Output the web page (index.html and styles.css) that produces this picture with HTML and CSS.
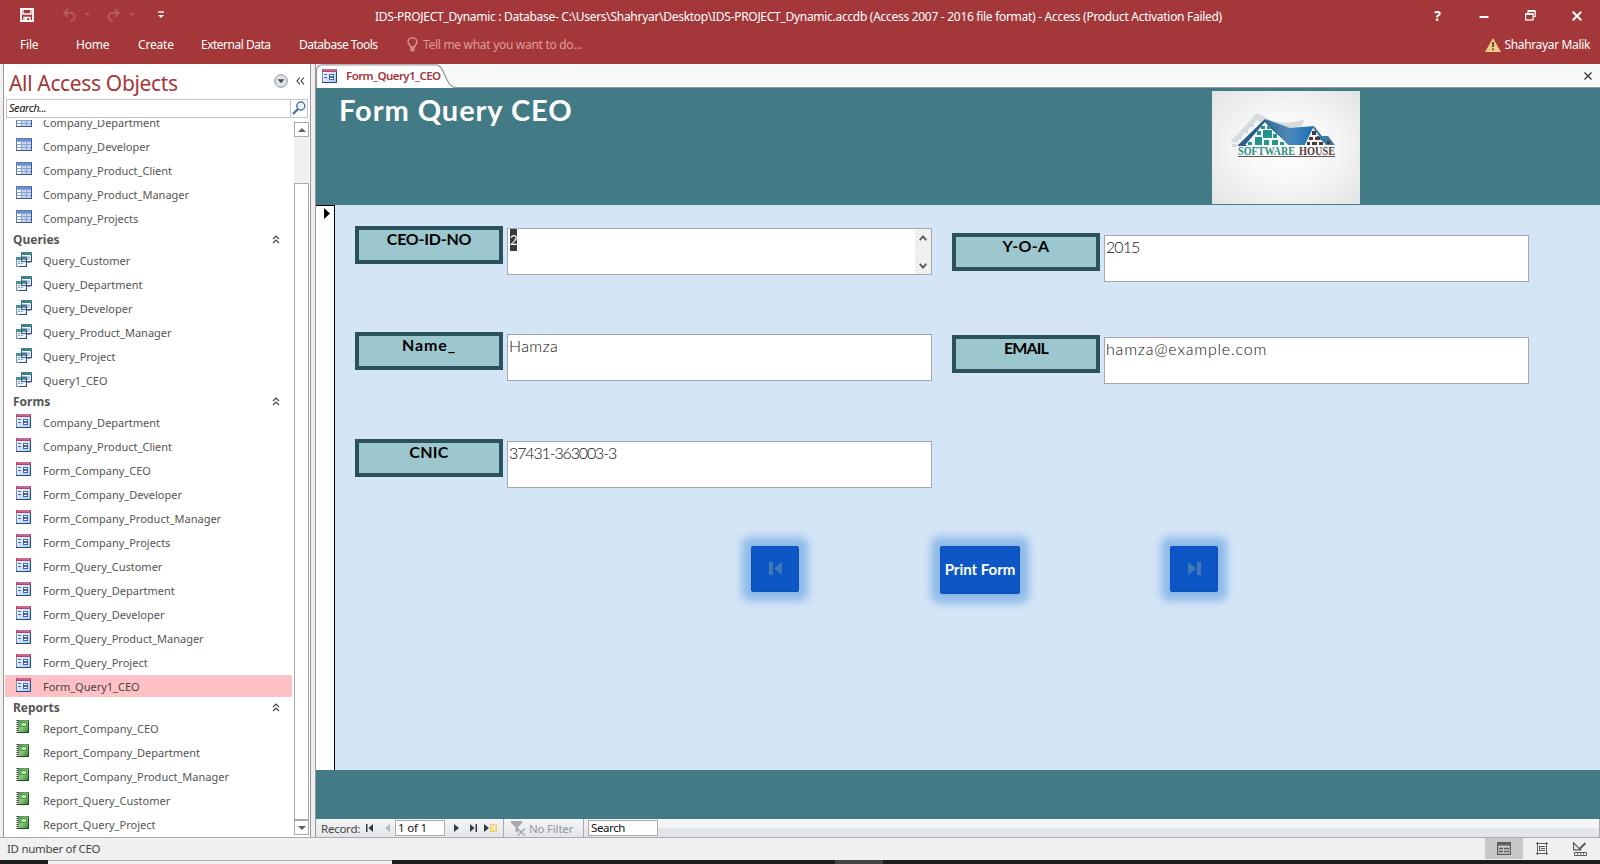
FILE: index.html
```html
<!DOCTYPE html>
<html lang="en">
<head>
<meta charset="utf-8">
<title>IDS-PROJECT_Dynamic - Access</title>
<link rel="stylesheet" href="styles.css">
</head>
<body>
<svg class="defs" width="0" height="0">
  <defs>
    <linearGradient id="gb" x1="0" y1="0" x2="1" y2="1"><stop offset="0" stop-color="#fff"/><stop offset="1" stop-color="#a9c4ee"/></linearGradient>
    <linearGradient id="gg" x1="0" y1="0" x2="1" y2="1"><stop offset="0" stop-color="#4f9a4c"/><stop offset=".5" stop-color="#8cc97c"/><stop offset="1" stop-color="#2d6b31"/></linearGradient>
  </defs>
  <symbol id="table" viewBox="0 0 16 14">
    <rect x=".5" y=".5" width="15" height="12" fill="#fff" stroke="#5c7ab5"/>
    <path d="M1 1h14v2H1z" fill="#6f8fc8"/><path d="M6 3h9v9H6z" fill="#c3d5f3"/>
    <path d="M1 3.500h14M1 6.500h14M1 9.500h14M5.500 3v10M10.500 3v10" stroke="#8ba4d2" fill="none"/>
    <path d="M0 12.500h16M15.500 1v12" stroke="#3a5896"/>
  </symbol>
  <symbol id="query" viewBox="0 0 16 15">
    <rect x="5.500" y=".5" width="10" height="9" fill="#eef4fc" stroke="#4c72a8"/><path d="M5 0h11v3H5z" fill="#3f8585"/>
    <path d="M11 5h3M11 7h3" stroke="#7c9ccc"/><path d="M15.500 3v7H11" stroke="#2d4d80" fill="none"/>
    <rect x=".5" y="5.500" width="10" height="9" fill="#eef4fc" stroke="#6f92c2"/><path d="M0 5h11v3H0z" fill="#4c9090"/>
    <path d="M2 9.500h2M5 9.500h2M2 11.500h2M5 11.500h2" stroke="#7c9ccc"/><path d="M5.500 5v4.500h5V5z" fill="none" stroke="#3b5c80"/><path d="M10.500 9v5.500H3" stroke="#2d4d80" fill="none"/>
  </symbol>
  <symbol id="form" viewBox="0 0 15 14">
    <rect x=".5" y=".5" width="14" height="13" fill="url(#gb)" stroke="#7289ba"/>
    <path d="M0 0h15v3H0z" fill="#b54672"/><path d="M1 1h13" stroke="#d889a6"/>
    <path d="M2 5.500h3M2 8.500h3" stroke="#4968a5"/><rect x="7.500" y="5.500" width="4" height="2" fill="#fff" stroke="#4968a5"/><rect x="7.500" y="8.500" width="4" height="2" fill="#fff" stroke="#4968a5"/>
    <path d="M14.500 3v10.500H0" stroke="#24457c" fill="none"/>
  </symbol>
  <symbol id="report" viewBox="0 0 14 14">
    <path d="M2 0h11v13H2z" fill="url(#gg)"/><path d="M12.500 0v13M2 12.500h11" stroke="#1f4d26" fill="none"/><path d="M2 .5h11" stroke="#5e8f5b"/>
    <rect x="5" y="2.500" width="5.500" height="4" fill="#b6e2a5" stroke="#4f9449"/>
    <path d="M1.500 0v13" stroke="#333" stroke-width="2" stroke-dasharray="1 1"/>
  </symbol>
  <symbol id="chev" viewBox="0 0 8 9"><path d="M1 4l3-3 3 3M1 8l3-3 3 3" fill="none" stroke="#444" stroke-width="1.200"/></symbol>
</svg>

<header class="ribbon">
  <div class="titlebar">
    <div class="quick">
      <svg class="save" width="14" height="14" viewBox="0 0 14 14"><path d="M1 1h12v12H1z" fill="none" stroke="#fff" stroke-width="1.800"/><path d="M3 1v5h8V1M4 13V9.500h6V13" fill="none" stroke="#fff" stroke-width="1.300"/><path d="M5 10h2v3H5z" fill="#fff"/></svg>
      <svg class="undo" width="30" height="14" viewBox="0 0 30 14"><path d="M6 1L2 5l4 4M2 5h7c5 0 5 7-1 8" fill="none" stroke="#b85a5e" stroke-width="1.800"/><path d="M23 5h5l-2.500 3z" fill="#b85a5e"/></svg>
      <svg class="redo" width="30" height="14" viewBox="0 0 30 14"><path d="M9 1l4 4-4 4M13 5H6c-5 0-5 7 1 8" fill="none" stroke="#b85a5e" stroke-width="1.800"/><path d="M23 5h5l-2.500 3z" fill="#b85a5e"/></svg>
      <svg class="more" width="6" height="8" viewBox="0 0 6 8"><path d="M0 1h6" stroke="#fff" stroke-width="1.400"/><path d="M0 4h6L3 7z" fill="#fff"/></svg>
    </div>
    <div class="caption">IDS-PROJECT_Dynamic : Database- C:\Users\Shahryar\Desktop\IDS-PROJECT_Dynamic.accdb (Access 2007 - 2016 file format) - Access (Product Activation Failed)</div>
    <div class="winbtns">
      <span class="help">?</span>
      <svg width="10" height="12" viewBox="0 0 10 12"><path d="M.5 7h9" stroke="#fff" stroke-width="2"/></svg>
      <svg width="11" height="11" viewBox="0 0 11 11"><path d="M3 3.500V1h7.200v5.500H8" fill="none" stroke="#fff" stroke-width="1.200"/><path d="M3 1h7" stroke="#fff" stroke-width="2"/><rect x=".6" y="4" width="7.500" height="6" fill="none" stroke="#fff" stroke-width="1.200"/><path d="M0 4.200h8.500" stroke="#fff" stroke-width="1.600"/></svg>
      <svg width="10" height="10" viewBox="0 0 10 10"><path d="M.8.8l8.400 8.400M9.200.8L.8 9.200" stroke="#fff" stroke-width="2"/></svg>
    </div>
  </div>
  <nav class="menus">
    <span class="m-file">File</span><span class="m-home">Home</span><span class="m-create">Create</span><span class="m-ext">External Data</span><span class="m-db">Database Tools</span>
    <span class="tell"><svg width="11" height="15" viewBox="0 0 11 15"><path d="M3.500 10C3.500 8 1 7.500 1 4.800a4.500 4 0 0 1 9 0C10 7.500 7.500 8 7.500 10z" fill="none" stroke="#e09a9c" stroke-width="1.300"/><path d="M3 11.800h5M3.500 13.500h4" stroke="#e09a9c" stroke-width="1.300"/></svg>Tell me what you want to do...</span>
    <span class="user"><svg width="16" height="14" viewBox="0 0 16 14"><path d="M8 0l8 14H0z" fill="#f0c987"/><path d="M8 4v5M8 10.500v1.800" stroke="#54432a" stroke-width="1.800"/></svg><span class="uname">Shahrayar Malik</span></span>
  </nav>
</header>

<div class="workspace">
  <aside class="pane">
    <div class="pane-head">
      <h2>All Access Objects</h2>
      <svg width="14" height="14" viewBox="0 0 14 14"><circle cx="7" cy="7" r="6.300" fill="#e2e4e8" stroke="#8c9199"/><path d="M3.500 5.200h7L7 9.200z" fill="#444b57"/></svg>
      <svg class="shut" width="9" height="8" viewBox="0 0 9 8"><path d="M4 .5L1 4l3 3.500M8 .5L5 4l3 3.500" fill="none" stroke="#333" stroke-width="1.100"/></svg>
    </div>
    <div class="search"><span>Search...</span><i><svg width="14" height="14" viewBox="0 0 14 14"><circle cx="8.800" cy="5" r="4" fill="#eef5fd" stroke="#4a75ae" stroke-width="1.400"/><path d="M6 8l-5 5" stroke="#4a6fa5" stroke-width="2.400"/></svg></i></div>
    <div class="list-area">
      <div class="list">
        <ul class="first">
          <li><svg class="ic"><use href="#table"/></svg>Company_Department</li>
          <li><svg class="ic"><use href="#table"/></svg>Company_Developer</li>
          <li><svg class="ic"><use href="#table"/></svg>Company_Product_Client</li>
          <li><svg class="ic"><use href="#table"/></svg>Company_Product_Manager</li>
          <li><svg class="ic"><use href="#table"/></svg>Company_Projects</li>
        </ul>
        <h3>Queries<svg width="8" height="9"><use href="#chev"/></svg></h3>
        <ul>
          <li><svg class="ic q"><use href="#query"/></svg>Query_Customer</li>
          <li><svg class="ic q"><use href="#query"/></svg>Query_Department</li>
          <li><svg class="ic q"><use href="#query"/></svg>Query_Developer</li>
          <li><svg class="ic q"><use href="#query"/></svg>Query_Product_Manager</li>
          <li><svg class="ic q"><use href="#query"/></svg>Query_Project</li>
          <li><svg class="ic q"><use href="#query"/></svg>Query1_CEO</li>
        </ul>
        <h3>Forms<svg width="8" height="9"><use href="#chev"/></svg></h3>
        <ul>
          <li><svg class="ic f"><use href="#form"/></svg>Company_Department</li>
          <li><svg class="ic f"><use href="#form"/></svg>Company_Product_Client</li>
          <li><svg class="ic f"><use href="#form"/></svg>Form_Company_CEO</li>
          <li><svg class="ic f"><use href="#form"/></svg>Form_Company_Developer</li>
          <li><svg class="ic f"><use href="#form"/></svg>Form_Company_Product_Manager</li>
          <li><svg class="ic f"><use href="#form"/></svg>Form_Company_Projects</li>
          <li><svg class="ic f"><use href="#form"/></svg>Form_Query_Customer</li>
          <li><svg class="ic f"><use href="#form"/></svg>Form_Query_Department</li>
          <li><svg class="ic f"><use href="#form"/></svg>Form_Query_Developer</li>
          <li><svg class="ic f"><use href="#form"/></svg>Form_Query_Product_Manager</li>
          <li><svg class="ic f"><use href="#form"/></svg>Form_Query_Project</li>
          <li class="selected"><svg class="ic f"><use href="#form"/></svg>Form_Query1_CEO</li>
        </ul>
        <h3>Reports<svg width="8" height="9"><use href="#chev"/></svg></h3>
        <ul>
          <li><svg class="ic r"><use href="#report"/></svg>Report_Company_CEO</li>
          <li><svg class="ic r"><use href="#report"/></svg>Report_Company_Department</li>
          <li><svg class="ic r"><use href="#report"/></svg>Report_Company_Product_Manager</li>
          <li><svg class="ic r"><use href="#report"/></svg>Report_Query_Customer</li>
          <li><svg class="ic r"><use href="#report"/></svg>Report_Query_Project</li>
        </ul>
      </div>
      <div class="scroll">
        <span class="sbtn"><svg width="8" height="4" viewBox="0 0 8 4"><path d="M0 4l4-4 4 4z" fill="#606060"/></svg></span>
        <span class="thumb"></span>
        <span class="sbtn"><svg width="8" height="4" viewBox="0 0 8 4"><path d="M0 0l4 4 4-4z" fill="#606060"/></svg></span>
      </div>
    </div>
  </aside>
  <div class="splitter"></div>

  <main class="doc">
    <div class="tabs">
      <svg class="tabshape" width="140" height="24" viewBox="0 0 140 24"><path d="M.5 24V6Q1 1 6 .8H120C129 1 129 23.500 140 23.500V24z" fill="#fff"/><path d="M.5 24V6Q1 1 6 .8H120C129 1 129 23.500 140 23.500" fill="none" stroke="#9a9f98" stroke-width="1.300"/></svg>
      <div class="tab"><svg width="15" height="14"><use href="#form"/></svg><span>Form_Query1_CEO</span></div>
      <svg class="close" width="8" height="8" viewBox="0 0 8 8"><path d="M.5.5l7 7M7.500.5l-7 7" stroke="#333" stroke-width="1.300"/></svg>
    </div>
    <section class="form-head">
      <h1>Form Query CEO</h1>
      <div class="logo">
        <svg width="148" height="113" viewBox="0 0 148 113">
          <defs>
            <radialGradient id="lg" cx=".5" cy=".5" r=".7"><stop offset="0" stop-color="#fff"/><stop offset=".4" stop-color="#f8f8f8"/><stop offset="1" stop-color="#e3e4e4"/></radialGradient>
            <linearGradient id="roof" x1="0" x2="1"><stop offset="0" stop-color="#2f6d9f"/><stop offset=".45" stop-color="#4e87b4"/><stop offset=".65" stop-color="#3d82bd"/><stop offset="1" stop-color="#1b70b0"/></linearGradient>
          </defs>
          <rect width="148" height="113" fill="url(#lg)"/>
          <path d="M18 51L45 22l15 8 14 2 18-3-5 14H60L45 29 24 52z" fill="#d9dcdc"/>
          <path d="M25 44h5v4h-5zM32 38h4v4h-4zM37 32h5v4h-5zM20 53h5v3h-5z" fill="#d8dada"/>
          <path d="M26 54L53 28l25 25H76L53 32 34 55h-8z" fill="#285f8a"/>
          <path d="M53 28l25 9 24-2-9 19H76z" fill="url(#roof)"/>
          <path d="M33 54l20-23 20 23z" fill="#f7fbfb"/>
          <path d="M102 35l14 19H93z" fill="#f3f3f3"/><path d="M102 35l15 19h-3l-13-17z" fill="#327caf"/>
          <path d="M104 45h12l7 9h-8zM116 45l7 9h-2l-6-7z" fill="#3979a5"/>
          <path d="M51 39h9v8h-9zM43 46h7v8h-7zM52 49h5v5h-5zM60 49h6v5h-6zM45 40h4v4h-4zM61 43h4v4h-4zM49 35h4v3h-4zM55 35h4v3h-4zM36 51h4v3h-4zM68 51h4v3h-4z" fill="#24958a"/>
          <path d="M100 40h4v4h-4zM97 46h4v3h-4zM103 46h5v3h-5zM95 51h3v3h-3zM100 51h5v3h-5zM107 51h4v3h-4zM115 50h3v3h-3z" fill="#4c3a3b"/>
          <text x="26" y="63.500" textLength="57" lengthAdjust="spacingAndGlyphs" class="logo-a">SOFTWARE</text>
          <text x="87" y="63.500" textLength="36" lengthAdjust="spacingAndGlyphs" class="logo-b">HOUSE</text>
          <path d="M26 65.500h97" stroke="#67504f"/>
        </svg>
      </div>
    </section>
    <section class="detail">
      <div class="selector"><svg width="6" height="11" viewBox="0 0 6 11"><path d="M0 0l6 5.500L0 11z" fill="#000"/></svg></div>
      <div class="canvas">
        <div class="fields">
          <div class="col left">
            <div class="field"><label class="w-id">CEO-ID-NO</label><div class="box active"><span class="sel">2</span><div class="mini"><svg width="8" height="6" viewBox="0 0 8 6"><path d="M.8 5.200L4 1.500l3.200 3.700" fill="none" stroke="#555" stroke-width="1.800"/></svg><svg width="8" height="6" viewBox="0 0 8 6"><path d="M.8.800L4 4.500 7.200.8" fill="none" stroke="#555" stroke-width="1.800"/></svg></div></div></div>
            <div class="field"><label class="w-name">Name_</label><div class="box v-name">Hamza</div></div>
            <div class="field"><label>CNIC</label><div class="box v-cnic">37431-363003-3</div></div>
          </div>
          <div class="col right">
            <div class="field"><label>Y-O-A</label><div class="box v-year">2015</div></div>
            <div class="field"><label class="w-mail">EMAIL</label><div class="box v-mail">hamza@example.com</div></div>
          </div>
        </div>
        <div class="buttons">
          <button class="btn"><svg width="13" height="13" viewBox="0 0 13 13"><path d="M0 0h4v13H0zM13 0v13L5 6.500z" fill="#4078b8"/></svg></button>
          <button class="btn print">Print Form</button>
          <button class="btn"><svg width="13" height="13" viewBox="0 0 13 13"><path d="M9 0h4v13H9zM0 0v13l8-6.500z" fill="#4078b8"/></svg></button>
        </div>
      </div>
    </section>
    <section class="form-foot"></section>
    <div class="recnav">
      <span class="rec">Record:</span>
      <svg class="n1" width="7" height="8" viewBox="0 0 7 8"><path d="M0 0h1.500v8H0zM7 0v8L2.500 4z" fill="#333a45"/></svg>
      <svg class="n2" width="5" height="8" viewBox="0 0 5 8"><path d="M5 0v8L0 4z" fill="#b5b9c0"/></svg>
      <span class="pos">1 of 1</span>
      <svg class="n3" width="5" height="8" viewBox="0 0 5 8"><path d="M0 0v8l5-4z" fill="#333a45"/></svg>
      <svg class="n4" width="7" height="8" viewBox="0 0 7 8"><path d="M5.500 0H7v8H5.500zM0 0v8l4.500-4z" fill="#333a45"/></svg>
      <svg class="n5" width="13" height="8" viewBox="0 0 13 8"><path d="M0 0v8l5-4z" fill="#333a45"/><path d="M6 .8h7M6 7.200h7M6.500 4h6M6.700 0v8M9.500 0v8M12.300 0v8" stroke="#edc53a" stroke-width="1.300" stroke-dasharray="1.600 1"/><path d="M8 2.500h3v3H8z" fill="#fff2a0"/></svg>
      <span class="nofilter"><svg width="15" height="15" viewBox="0 0 15 15"><path d="M0 0h11v2L7 6v6L4.500 10V6L0 2z" fill="#a6a8ac"/><path d="M7 8l7 6.500M14 7.500L7 14.500" stroke="#a6a8ac" stroke-width="1.500"/></svg><b>No Filter</b></span>
      <span class="rsearch">Search</span>
      <span class="hscroll"></span>
    </div>
  </main>
</div>

<footer class="status">
  <span>ID number of CEO</span>
  <div class="views">
    <i class="on"><svg width="14" height="13" viewBox="0 0 14 13"><rect x=".6" y=".6" width="12.800" height="11.800" fill="none" stroke="#5c5c5c" stroke-width="1.200"/><path d="M0 0h14v3.500H0z" fill="#5c5c5c"/><path d="M2 6.500h4M2 9.500h4M7 6.500h5M7 9.500h5" stroke="#5c5c5c" stroke-width="1.500"/></svg></i>
    <i><svg width="12" height="13" viewBox="0 0 12 13"><path d="M1.500 0v13M10.500 0v13M0 1.500h12M0 11.500h12" stroke="#5c5c5c" fill="none"/><path d="M3 4.500h6M3 8.500h6M5 6.500h4M3.500 4v5" stroke="#5c5c5c" fill="none"/></svg></i>
    <i><svg width="14" height="14" viewBox="0 0 14 14"><path d="M.6.8l7 7h-7z" fill="none" stroke="#5c5c5c" stroke-width="1.200"/><path d="M6 7.500l6.500-6.500" stroke="#5c5c5c" stroke-width="1.900"/><path d="M1.500 10.500h12v3h-12zM4.500 10.500v2M7.500 10.500v2M10.500 10.500v2" fill="none" stroke="#5c5c5c"/></svg></i>
  </div>
</footer>
<div class="taskbar"><span class="t1"></span><span class="t2"></span></div>
</body>
</html>
```
FILE: styles.css
```css
* { box-sizing: border-box; }
body { margin: 0; width: 1600px; height: 864px; overflow: hidden; display: flex; flex-direction: column; background: #f0f0f0; font-family: "Noto Sans", "Open Sans", sans-serif; font-size: 12px; color: #444; }
svg { display: block; flex: none; }
.defs { position: absolute; }
ul, h1, h2, h3 { margin: 0; padding: 0; list-style: none; font-weight: normal; }

/* Ribbon */
.ribbon { height: 64px; background: #a4373a; color: #fff; flex: none; }
.titlebar { display: flex; height: 32px; align-items: center; }
.quick { width: 375px; display: flex; align-items: center; padding: 0 0 2px 20px; flex: none; }
.undo { margin-left: 28px; }
.redo { margin-left: 14px; }
.more { margin-left: 22px; }
.caption { flex: 1; letter-spacing: -0.29px; white-space: nowrap; padding-top: 1px; }
.winbtns { display: flex; align-items: center; padding: 0 18px 1px 0; }
.help { font-weight: bold; font-size: 14px; margin-right: 38px; }
.winbtns svg + svg { margin-left: 36px; }
.menus { display: flex; height: 25px; align-items: center; white-space: nowrap; letter-spacing: -0.2px; }
.menus > span { flex: none; }
.m-file { width: 56px; margin-left: 20px; }
.m-home { width: 62px; }
.m-create { width: 63px; }
.m-ext { width: 98px; letter-spacing: -0.5px; }
.m-db { width: 108px; letter-spacing: -0.5px; }
.tell { display: flex; align-items: center; gap: 5px; color: #e09a9c; letter-spacing: -0.3px; }
.menus .user { display: flex; align-items: center; gap: 4px; margin-left: auto; margin-right: 10px; letter-spacing: -0.35px; }

/* Navigation pane */
.workspace { display: flex; height: 774px; flex: none; border-bottom: 1px solid #a9abae; }
.pane { width: 308px; margin-left: 3px; border-left: 1px solid #989898; border-right: 1px solid #989898; background: #fff; flex: none; display: flex; flex-direction: column; }
.pane-head { height: 35px; display: flex; align-items: center; padding: 0 5px 2px 5px; }
.pane-head h2 { font-size: 21px; color: #a4373a; flex: 1; letter-spacing: -0.35px; white-space: nowrap; padding-top: 4px; }
.shut { margin-left: 8px; }
.search { height: 19px; margin: 0 2px; border: 1px solid #c5c5c5; display: flex; font-style: italic; color: #111; font-size: 11px; line-height: 16px; letter-spacing: -0.45px; padding-left: 2px; }
.search span { flex: 1; }
.search i { width: 17px; border-left: 1px solid #c5c5c5; padding: 1px 0 0 1px; }
.list-area { display: flex; height: 719px; overflow: hidden; }
.list { flex: 1; overflow: hidden; padding: 0 2px 0 1px; margin-top: 2px; }
.list ul { display: flex; flex-direction: column; gap: 2px; padding: 1px 0; }
.list .first { margin-top: -10px; }
.list li { height: 22px; display: flex; align-items: center; padding-left: 11px; font-size: 11px; color: #555; white-space: nowrap; }
.list li.selected { background: #ffc1c5; color: #444; }
.ic { width: 16px; height: 14px; margin-right: 11px; margin-top: -2px; }
.ic.q { height: 15px; }
.ic.f { width: 15px; margin-right: 12px; }
.ic.r { width: 14px; margin-right: 13px; }
.list h3 { height: 18px; line-height: 17px; font-size: 12px; font-weight: bold; color: #555; padding: 0 12px 0 8px; display: flex; justify-content: space-between; align-items: center; }
.scroll { width: 15px; margin: 4px 1px 0 0; height: 713px; background: #f0f0f0; display: flex; flex-direction: column; flex: none; }
.sbtn { height: 15px; border: 1px solid #a9a9a9; background: #fff; display: flex; align-items: center; justify-content: center; flex: none; }
.thumb { margin-top: 46px; flex: 1; background: #fff; border: 1px solid #a9a9a9; }
.splitter { width: 5px; background: #edeff3; border-right: 1px solid #989898; flex: none; }

/* Document */
.doc { flex: 1; display: flex; flex-direction: column; min-width: 0; }
.tabs { height: 24px; background: #f8f8f8; border-bottom: 1px solid #8b9a9b; display: flex; align-items: center; position: relative; flex: none; }
.tabshape { position: absolute; left: 0; top: 0; }
.tab { position: relative; display: flex; align-items: center; gap: 9px; padding-left: 6px; color: #a4373a; font-size: 11.500px; font-weight: 600; letter-spacing: -0.55px; flex: 1; }
.close { margin-right: 8px; }
.form-head { height: 117px; background: #427b85; display: flex; flex: none; padding-right: 240px; justify-content: space-between; align-items: flex-start; }
.form-head h1 { font: bold 29px/34px Lato, sans-serif; color: #fff; padding: 5px 0 0 23px; letter-spacing: 0.95px; white-space: nowrap; }
.logo { margin-top: 3px; }
.logo-a, .logo-b { font: bold 11.500px "Liberation Serif", serif; fill: #2c8f86; }
.logo-b { fill: #55403f; }
.detail { height: 565px; display: flex; flex: none; }
.selector { width: 19px; background: #fff; border-right: 1px solid #000; border-top: 1px solid #000; padding: 2px 0 0 8px; }
.canvas { flex: 1; background: #d4e5f6; }
.fields { display: flex; gap: 20px; padding-left: 20px; height: 341px; }
.col { width: 577px; display: flex; flex-direction: column; }
.left { padding-top: 21px; gap: 57px; }
.left .field:last-child { margin-top: 1px; }
.right { padding-top: 28px; gap: 53px; }
.field { display: flex; gap: 4px; height: 49px; }
.field label { width: 148px; height: 38px; border: 4px solid #2b525c; background: #9dc7ce; text-align: center; font: bold 16px/17px Lato, sans-serif; color: #000; letter-spacing: 0.3px; }
.field .w-id { letter-spacing: -0.25px; }
.field .w-name { letter-spacing: 0.9px; }
.field .w-mail { letter-spacing: -0.9px; }
.box { width: 425px; height: 47px; margin-top: 2px; border: 1px solid #a3a8b0; background: #fff; font: 300 16px/22px Lato, sans-serif; color: #111; padding-left: 1px; }
.v-name { letter-spacing: 0.4px; }
.v-cnic { letter-spacing: -1.15px; }
.v-year { letter-spacing: -0.95px; }
.v-mail { letter-spacing: 0.8px; }
.active { display: flex; justify-content: space-between; }
.sel { background: #3b3b3b; color: #fff; height: 22px; width: 7px; line-height: 22px; margin-left: 1px; font-size: 13px; font-weight: 400; }
.mini { width: 16px; background: #f0f0f0; display: flex; flex-direction: column; justify-content: space-between; align-items: center; padding: 6px 0 5px; }
.buttons { display: flex; padding-left: 416px; align-items: flex-start; }
.btn { width: 48px; height: 46px; border: 1px solid #0c4fb4; border-radius: 2px; background: #0c57c5; box-shadow: 0 0 8px 9px #8dbae9; padding: 0 0 2px; display: flex; align-items: center; justify-content: center; color: #fff; font: bold 15px Lato, sans-serif; }
.print { width: 80px; height: 48px; margin: 0 150px 0 141px; white-space: nowrap; }
.form-foot { height: 49px; background: #427b85; flex: none; }

/* Record navigator */
.recnav { height: 19px; background: linear-gradient(#f4f5f6, #e4e5e8); display: flex; align-items: center; font-size: 11.500px; white-space: nowrap; border-right: 1px solid #aaa; }
.rec { width: 50px; padding-left: 5px; letter-spacing: -0.25px; }
.n2 { margin-left: 12px; }
.pos { width: 50px; height: 16px; border: 1px solid #aaa; background: #fff; margin-left: 5px; padding-left: 2px; line-height: 14px; color: #111; letter-spacing: -0.2px; }
.n3 { margin-left: 9px; }
.n4 { margin-left: 11px; }
.n5 { margin-left: 7px; }
.nofilter { display: flex; align-items: center; gap: 3px; border-left: 1px solid #aaa; border-right: 1px solid #aaa; height: 18px; width: 81px; margin-left: 6px; padding-left: 7px; color: #93969b; }
.nofilter b { font-weight: normal; letter-spacing: -0.2px; }
.rsearch { width: 70px; height: 16px; border: 1px solid #aaa; background: #fff; margin-left: 4px; padding-left: 2px; line-height: 14px; color: #111; letter-spacing: -0.4px; }
.hscroll { flex: 1; align-self: stretch; background: linear-gradient(#f4f5f6 50%, #e4e5e8 50%); }

/* Status and taskbar */
.status { height: 22px; background: #f0f0f0; display: flex; justify-content: space-between; align-items: center; padding: 0 1px 1px 7px; font-size: 11.500px; letter-spacing: -0.3px; flex: none; }
.views { display: flex; height: 21px; }
.views i { width: 38px; display: flex; align-items: center; justify-content: center; }
.views .on { background: #c8c8c8; }
.taskbar { height: 4px; background: #1c1b1e; display: flex; }
.t1 { width: 344px; margin-left: 48px; background: #f0f0f0; border-top: 1px solid #aaa; }
.t2 { width: 48px; margin-left: 443px; background: #454347; }
```
